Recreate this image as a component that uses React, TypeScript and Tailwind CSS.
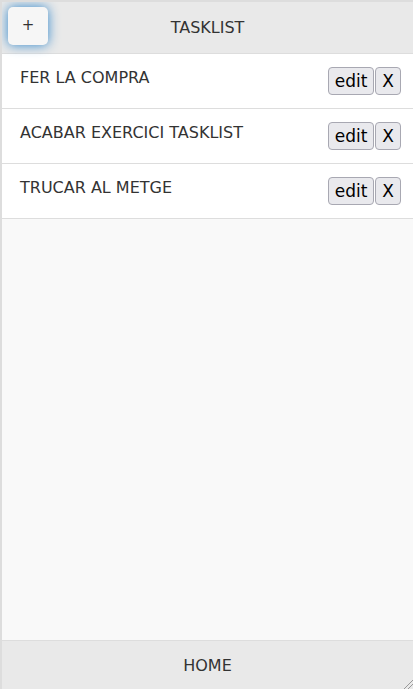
const tasks = ['FER LA COMPRA', 'ACABAR EXERCICI TASKLIST', 'TRUCAR AL METGE'];

function SmallButton({ children }: { children: React.ReactNode }) {
  return (
    <button className="h-[28px] rounded-[4px] border border-[#a8a8b2] bg-[#e9e9ed] px-[6px] text-[17px] leading-none text-black">
      {children}
    </button>
  );
}

export default function App() {
  return (
    <div
      className="flex h-[689px] w-[413px] flex-col overflow-hidden border-l-2 border-t-2 border-[#dddddd] bg-[#f9f9f9] text-[16px] text-[#333333]"
      style={{ fontFamily: '"DejaVu Sans", sans-serif' }}
    >
      <header className="relative flex h-[52px] shrink-0 items-center justify-center border-b border-[#dddddd] bg-[#e9e9e9]">
        <button className="absolute left-[6px] top-[5px] flex h-[38px] w-[40px] items-center justify-center rounded-[5px] bg-[#f6f6f6] pb-[1px] text-[15px] text-[#333333] shadow-[0_0_12px_#3388cc]">
          +
        </button>
        <h1 className="text-[16px] font-normal">TASKLIST</h1>
      </header>

      <ul className="bg-white">
        {tasks.map((task) => (
          <li
            key={task}
            className="flex h-[55px] items-start justify-between border-b border-[#dddddd] pl-[18px] pr-[12px]"
          >
            <span className="pt-[12px]">{task}</span>
            <div className="flex gap-[1px] self-center">
              <SmallButton>edit</SmallButton>
              <SmallButton>X</SmallButton>
            </div>
          </li>
        ))}
      </ul>

      <div className="flex-1" />

      <footer className="relative flex h-[49px] shrink-0 items-center justify-center border-t border-[#dddddd] bg-[#e9e9e9] pt-[2px]">
        <span>HOME</span>
        <svg className="absolute bottom-0 right-0" width="11" height="11" viewBox="0 0 11 11">
          <path d="M11 2 L2 11 M11 6 L6 11" stroke="#999" strokeWidth="1" />
        </svg>
      </footer>
    </div>
  );
}
